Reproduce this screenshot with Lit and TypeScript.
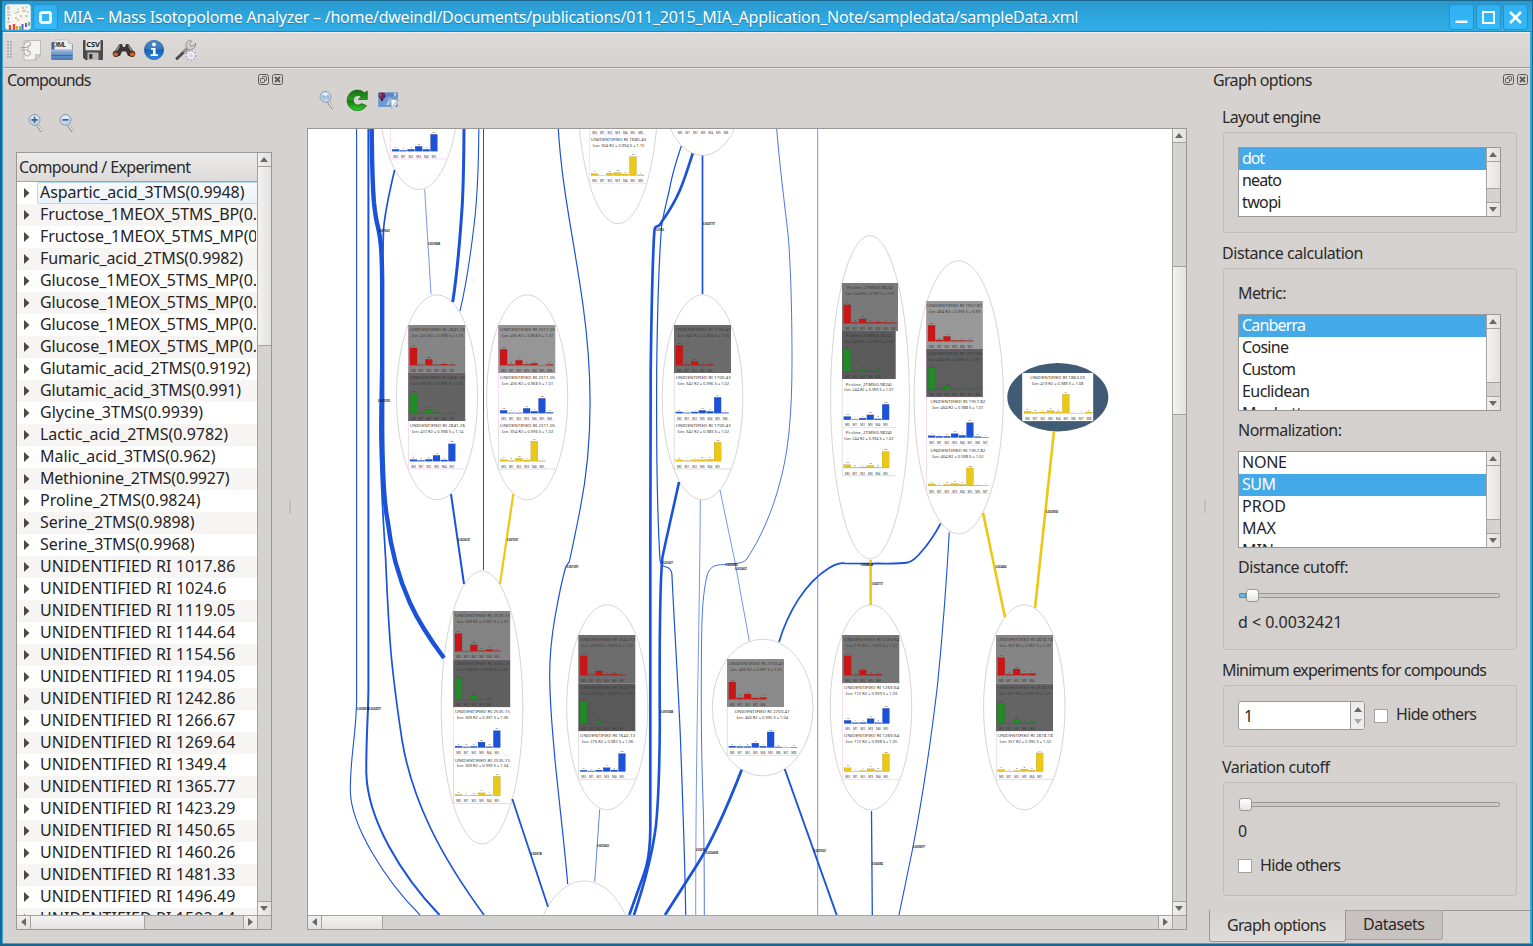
import { LitElement, html, svg, css, nothing } from "lit";
import { customElement, property } from "lit/decorators.js";

/** One-line label whose tracking is tuned so that it fills a given width. */
@customElement("fit-label")
class FitLabel extends LitElement {
  @property({ type: Number }) w = 0;
  @property() text = "";
  static styles = css`
    :host { display: inline-block; white-space: pre; flex: none; }
    span { display: inline-block; }
  `;
  firstUpdated() {
    const el = this.renderRoot.querySelector("span") as HTMLElement;
    const n = this.text.length;
    if (this.w && n > 1) {
      const natural = el.getBoundingClientRect().width;
      el.style.letterSpacing = `${(this.w - natural) / (n - 1)}px`;
    }
  }
  render() {
    return html`<span>${this.text}</span>`;
  }
}

const t = (text: string, w: number) => html`<fit-label .text=${text} .w=${w}></fit-label>`;

const UNK = 195.5;
const compounds: [string, number][] = [
  ["Aspartic_acid_3TMS(0.9948)", 204.5],
  ["Fructose_1MEOX_5TMS_BP(0.", 217],
  ["Fructose_1MEOX_5TMS_MP(0", 217.5],
  ["Fumaric_acid_2TMS(0.9982)", 203],
  ["Glucose_1MEOX_5TMS_MP(0.", 217],
  ["Glucose_1MEOX_5TMS_MP(0.", 217],
  ["Glucose_1MEOX_5TMS_MP(0.", 217],
  ["Glucose_1MEOX_5TMS_MP(0.", 217],
  ["Glutamic_acid_2TMS(0.9192)", 210.5],
  ["Glutamic_acid_3TMS(0.991)", 201],
  ["Glycine_3TMS(0.9939)", 163],
  ["Lactic_acid_2TMS(0.9782)", 188],
  ["Malic_acid_3TMS(0.962)", 175.5],
  ["Methionine_2TMS(0.9927)", 189.5],
  ["Proline_2TMS(0.9824)", 160.5],
  ["Serine_2TMS(0.9898)", 154.5],
  ["Serine_3TMS(0.9968)", 154.5],
  ["UNIDENTIFIED RI 1017.86", UNK],
  ["UNIDENTIFIED RI 1024.6", 186.5],
  ["UNIDENTIFIED RI 1119.05", UNK],
  ["UNIDENTIFIED RI 1144.64", UNK],
  ["UNIDENTIFIED RI 1154.56", UNK],
  ["UNIDENTIFIED RI 1194.05", UNK],
  ["UNIDENTIFIED RI 1242.86", UNK],
  ["UNIDENTIFIED RI 1266.67", UNK],
  ["UNIDENTIFIED RI 1269.64", UNK],
  ["UNIDENTIFIED RI 1349.4", 186.5],
  ["UNIDENTIFIED RI 1365.77", UNK],
  ["UNIDENTIFIED RI 1423.29", UNK],
  ["UNIDENTIFIED RI 1450.65", UNK],
  ["UNIDENTIFIED RI 1460.26", UNK],
  ["UNIDENTIFIED RI 1481.33", UNK],
  ["UNIDENTIFIED RI 1496.49", UNK],
  ["UNIDENTIFIED RI 1502.14", UNK],
];

/* ---------- graph data ---------- */

const B = "#1a52d9";
const Y = "#ebc815";
const R = "#cc1616";
const G = "#228b27";

// cx, cy, rx, ry
const nodes: number[][] = [
  [418.7, 87, 40.3, 102.5],
  [618, 87, 40.5, 136.7],
  [702.5, 87, 40.5, 68.5],
  [437, 397.3, 40.5, 102.5],
  [527.2, 397.3, 40.5, 102.5],
  [702.5, 397.3, 40.3, 102.5],
  [870, 397.3, 39.4, 161.7],
  [958.7, 397.3, 44.6, 136.6],
  [482, 707.5, 40.8, 136.5],
  [607.2, 707.3, 40.5, 102.5],
  [762.7, 707.5, 50.4, 68.4],
  [871, 707.3, 40.7, 102.5],
  [1024.3, 707.3, 40.7, 102.5],
  [584.5, 963, 50.5, 82],
];

type Panel = {
  x: number; y: number; w: number; bg: string; edge?: string;
  title: string; tw?: number; ion: string; c: string; bars: [number, string][];
};
const P = (x: number, y: number, w: number, bg: string, title: string, ion: string, c: string, bars: string, tw = 55, edge = ""): Panel => ({
  x, y, w, bg, title, ion, c, tw, edge,
  bars: bars.split(" ").map((s) => { const [h, l] = s.split(":"); return [+h, l] as [number, string]; }),
});
const PINK = "#f0c4ec";
const GREY = "#c8c8c8";
const U = "UNIDENTIFIED RI ";
const panels: Panel[] = [
  P(390.3, 111, 56, "#fff", "", "", B, "2:7 1:4 2:6 5:18 2:6 17:62", 55, PINK),
  P(589.3, 87, 57, "#fff", "", "", Y, "0: 0: 0: 0: 0: 0: 0:", 55, PINK),
  P(589.3, 135.3, 57, "#fff", U + "1680.43", "Ion: 304 R2 = 0.994 S = 1.10", Y, "2:7 .3: 2.4:8 3:10 1.6:5 19:75 .7:1", 55, PINK),
  P(674.7, 87, 57, "#fff", "", "", Y, "0: 0: 0: 0: 0: 0: 0:", 55, ""),

  P(408.2, 325, 57, "#858585", U + "2841.26", "Ion: 472 R2 = 0.998 S = 1.01", R, "17.5:69 .5:1 6:23 .6:1 1.3:5 .7:2", 55, "#b58fb3"),
  P(408.2, 373, 57, "#636363", U + "2841.26", "Ion: 399 R2 = 0.996 S = 1.00", G, "20:83 .7:2 4:13 1:4 .2: .3:1", 55, "#7d637c"),
  P(408.2, 421, 57, "#fff", U + "2841.26", "Ion: 472 R2 = 0.998 S = 1.14", B, "1.8:6 1:5 2:5 6:17 1.4:4 17.5:68", 55, PINK),

  P(498.3, 325, 57, "#969696", U + "2311.05", "Ion: 456 R2 = 0.968 S = 1.01", R, "16:65 1:3 5:19 1:3 2:7 .2: 1:3", 55, "#b58fb3"),
  P(498.3, 373, 57, "#fff", U + "2311.05", "Ion: 456 R2 = 0.968 S = 1.01", B, "3:10 .5:1 .5:1 5:19 2:7 15:53 1:3", 55, PINK),
  P(498.3, 421, 57, "#fff", U + "2311.05", "Ion: 354 R2 = 0.996 S = 1.02", Y, "1.6:6 .7:2 3:10 1.3:4 20:77 .5:1", 55, GREY),

  P(674, 325, 57, "#6b6b6b", U + "1700.43", "Ion: 342 R2 = 0.994 S = 1.00", R, "20:78 .7:2 4:13 .7:2 1:3"),
  P(674, 373, 57, "#fff", U + "1700.43", "Ion: 342 R2 = 0.996 S = 1.02", B, "1.4:5 .6:1 1.4:4 3:12 2:6 16:61 .7:1", 55, GREY),
  P(674, 421, 57, "#fff", U + "1700.43", "Ion: 342 R2 = 0.983 S = 1.02", Y, "1.4:5 .6:1 1.4:4 1.6:8 2:6 19:72", 55, GREY),

  P(842, 283, 56, "#797979", "Proline_2TMS(0.9824)", "Ion: 244 R2 = 0.997 S = 1.01", R, "18.5:71 1:3 4.5:16 1:2 1.3:5 1:2 .7:1", 46),
  P(842, 331, 53.7, "#5b5b5b", "Proline_2TMS(0.9824)", "Ion: 244 R2 = 0.999 S = 1.00", G, "22:87 .5:1 2:8 .5:1 .8:3", 46),
  P(842, 379.5, 53.7, "#fff", "Proline_2TMS(0.9824)", "Ion: 244 R2 = 0.999 S = 1.07", B, "3.3:13 .5:1 1.7:7 5:20 1:3 15.5:60", 46, GREY),
  P(842, 427.7, 53.7, "#fff", "Proline_2TMS(0.9824)", "Ion: 244 R2 = 0.994 S = 1.02", Y, "3.3:13 .6:2 1:4 2.5:10 .7:3 16.5:65", 46, GREY),

  P(926.3, 301, 56.5, "#999", U + "1957.82", "Ion: 464 R2 = 0.999 S = 0.99", R, "16:63 1.4:5 5:18 1:4 1:4 .7:2", 55, "#b58fb3"),
  P(926.3, 349, 56.5, "#5e5e5e", U + "1957.82", "Ion: 464 R2 = 0.999 S = 1.01", G, "22:84 .5:1 3:10 .4: .5:1 .2: .5:1", 55, "#9d739c"),
  P(926.3, 397.3, 63.3, "#fff", U + "1957.82", "Ion: 464 R2 = 0.988 S = 1.01", B, "2:7 1.4:4 1.4:5 4:15 2.3:7 15:57 1:3 .5:1", 55, PINK),
  P(926.3, 445.6, 63.3, "#fff", U + "1957.82", "Ion: 464 R2 = 0.998 S = 1.02", Y, "2:7 .4:1 1.4:5 2.3:8 1.6:5 18:70 .5:1 .4:1", 55, PINK),

  P(453.2, 611, 57, "#838383", U + "2535.15", "Ion: 309 R2 = 0.997 S = 1.01", R, "17.7:69 .3: 6.5:23 .7:3 1.8:6 .7:1", 55, "#b58fb3"),
  P(453.2, 659.3, 57, "#5f5f5f", U + "2535.15", "Ion: 309 R2 = 0.998 S = 1.01", G, "21.5:87 .3: 4.3:13 .3: .7:2"),
  P(453.2, 707.3, 57, "#fff", U + "2535.15", "Ion: 309 R2 = 0.997 S = 1.06", B, "1.5:5 .8:3 1.3:5 5.5:20 1:3 17:67", 55, PINK),
  P(453.2, 755.5, 57, "#fff", U + "2535.15", "Ion: 309 R2 = 0.999 S = 1.04", Y, "1.3:5 .6:1 .8:2 3:11 1:4 19.5:75", 55, GREY),

  P(578.3, 635, 57, "#6d6d6d", U + "1642.13", "Ion: 273 R2 = 1.000 S = 1.01", R, "19.5:76 .7:1 4.3:14 1:3 1.4:5 .7:1"),
  P(578.3, 683.3, 57, "#595959", U + "1642.13", "Ion: 273 R2 = 1.000 S = 1.01", G, "22:87 .3:1 2:8 .4:1 .4:1 .4:1"),
  P(578.3, 731.3, 57, "#fff", U + "1642.13", "Ion: 273 R2 = 0.982 S = 1.06", B, "1.4:6 .7:1 1.5:5 4:14 1.6:5 18:70", 55, GREY),

  P(727, 659, 57, "#8a8a8a", U + "2703.41", "Ion: 400 R2 = 0.997 S = 1.01", R, "17.3:68 1.5:5 5.3:19 1.3:4 1.8:5"),
  P(727, 707.3, 70.5, "#fff", U + "2703.41", "Ion: 400 R2 = 0.995 S = 1.04", B, "1.5:6 1.2:4 1.2:3 4.5:17 1.4:4 15.7:60 .7:2 .3:1 .5:2", 55, GREY),

  P(842.3, 635, 57, "#747474", U + "1269.64", "Ion: 172 R2 = 1.000 S = 1.01", R, "19.5:76 .5:1 5.3:17 1:3 1.2:3", 55, "#8d738c"),
  P(842.3, 683.3, 57, "#fff", U + "1269.64", "Ion: 172 R2 = 0.999 S = 1.03", B, "3.3:12 1:4 1.2:4 5:19 1:3 15.3:58", 55, PINK),
  P(842.3, 731.3, 57, "#fff", U + "1269.64", "Ion: 172 R2 = 0.998 S = 1.05", Y, "3.8:15 .5:1 1:4 2.8:11 1:3 17.7:68", 55, PINK),

  P(996, 635, 57, "#858585", U + "2818.18", "Ion: 357 R2 = 0.967 S = 1.07", R, "17.6:67 1:3 6.3:22 1.5:5 2:7"),
  P(996, 683.3, 57, "#646464", U + "2818.18", "Ion: 357 R2 = 0.997 S = 1.01", G, "20.7:78 .4: 4.3:15 1:4 1.4:5"),
  P(996, 731.3, 57, "#fff", U + "2818.18", "Ion: 357 R2 = 0.995 S = 1.02", Y, "2:6 .6:1 1:3 2.5:8 1.4:5 18.7:71", 55, GREY),
  P(1022.2, 373, 71, "#fff", U + "1863.03", "Ion: 419 R2 = 0.989 S = 1.08", Y, "2:6 1:3 1.3:4 2.7:9 1.4:5 19:71 .3:1 .3:1 1.3:5"),
];

// stroke width, colour, path
const edges: [number, string, string][] = [
  [1.1, B, "M356.6 129V700C356.2 735 350.3 755 350.3 790C350.3 825 385 880 420 915"],
  [2, B, "M368.4 129V690C368 720 366 740 366.3 773C367.5 820 402 876 439.5 915"],
  [4.4, B, "M371.7 129C372 170 372.5 185 374 203C375.5 217 376.5 222 378 227C380 236 382.2 245 382.2 290V430C382.5 470 383.5 500 387.5 520C391.5 555 401 583 410 603C420 625 432 642 444 658"],
  [1.7, B, "M394.6 170C390 190 385 210 383.5 230C382.5 260 382.5 300 381.5 340C380.5 380 379.5 420 380 440C381 490 384 530 385.7 560C387 590 388.5 620 390 640C392 670 396 700 402 740C412 800 440 855 484 915"],
  [.6, B, "M424.7 189.3L431 294.3"],
  [3, B, "M464 129C463.8 160 463.5 190 461.7 213C459.5 245 457 275 452.7 302"],
  [1.1, B, "M478.8 129C478.6 170 477 200 474.3 223C470 260 465 290 460 311"],
  [1, B, "M483.5 129V570"],
  [1.2, B, "M558.3 129C562 190 574 240 583 305C592 370 594 440 580 510C575 535 572 550 569.3 561.7L565.7 567C562 580 558 600 555 617C551 640 549.5 655 549.7 677C550 710 553 735 555 760C560 810 565 850 567.7 884"],
  [2, B, "M451 494L464 584"],
  [2.2, Y, "M513.3 494L500 584"],
  [1.8, B, "M512.3 799L548 906.7"],
  [.7, B, "M599.7 809.3L594.7 881.7"],
  [2.7, B, "M692.7 153.3C689 165 685 178 680 190C674 204 668 213 661.7 221.7Q660 226 656.5 226.5Q654.5 227 654.3 232C652.5 260 651.5 310 650.7 370C650.3 420 650.3 480 650.3 560V830C650 860 645 872 640 885L629.3 915"],
  [1.2, B, "M681.3 146C676 162 672 175 670 187C666 205 663 215 661.5 227C659 260 657.5 300 656.7 370C656.3 440 657 510 660 560Q661 566 666 567Q671 568 671.9 574C674 620 679 700 680.5 740C683 810 685 860 685.7 915"],
  [2.6, B, "M679 482C673 510 667 535 662.3 558C659.5 590 659.3 640 659.8 727C659.5 770 658.5 800 656 825C653 850 645 882 634 915"],
  [1.7, B, "M702.5 155.5V294"],
  [.8, B, "M776.7 129C780 170 786 215 788.3 237C791 270 792 320 792 360C792 410 789 450 780 482C773 510 760 540 746 560Q743 563 735 563.5L718 565Q709 566 706.7 577C703 595 702 610 701.6 640C701 700 701 740 703 800C704 830 704.3 870 704.3 915"],
  [.6, B, "M817.7 129V915"],
  [.6, B, "M700.3 500C700 560 698.5 650 697.5 700C696.5 770 695.7 830 695.7 915"],
  [.6, B, "M720 490L735 562L749.3 641"],
  [1.8, B, "M940.7 523.3C935 534 929 543 922 551Q914 561 908 562.5C895 564.5 880 563 871 563.7L845 563.3Q838 562.5 829 568C805 583 788 612 779 642"],
  [1.1, B, "M949.3 532.3C946 590 942 640 937.5 685C931 740 922 800 913 847L899 915"],
  [2.6, Y, "M983 512.7L1005 617.3"],
  [2.6, Y, "M1054 431L1035 608"],
  [2.6, Y, "M870.6 560V605"],
  [2.8, B, "M741.7 769.7C728 805 710 845 695 868L665 915"],
  [1.9, B, "M784.7 769L836.7 915"],
  [1.3, B, "M871.5 811L872.3 915"],
];

const edgeLabels: [number, number, string, number][] = [
  [379, 232, "0.00199421", 11], [428, 244.6, "0.00318488", 12], [703, 225, "0.00207757", 12], [656, 230.8, "0.001826", 8],
  [458, 541, "0.00234147", 12], [507, 541, "0.00279419", 11], [566.5, 567.7, "0.00312991", 12], [378, 401.6, "0.00153992", 12],
  [357, 709.9, "0.003005180.00229477", 24], [531, 855, "0.00255786", 11], [597, 847, "0.00314423", 12], [661, 713, "0.00153848", 12],
  [663, 563.6, "0.00314477", 10], [1046, 513, "0.00239500", 12], [995.5, 568, "0.00224864", 11], [861, 566, "0.00248188", 12],
  [872, 585, "0.00207737", 11], [725.5, 566, "0.00303858", 12], [735, 570.2, "0.00324021", 12], [696, 850.8, "0.00310", 9],
  [706, 853.7, "0.00234698", 12], [814, 851.6, "0.00275421", 12], [872, 864.8, "0.00245882", 11], [913, 848, "0.00296977", 12],
];

const drawPanel = (p: Panel) => {
  const base = p.y + 40.3;
  const mid = p.x + p.w / 2 + (p.w === 57 ? 0.8 : 0);
  const step = 7.67;
  return svg`
    <rect x=${p.x} y=${p.y} width=${p.w} height="48.1" fill=${p.bg}></rect>
    ${p.edge ? svg`<path d="M${p.x + .3} ${p.y}v48h${p.w}" fill="none" stroke=${p.edge} stroke-width=".6"></path>` : nothing}
    ${p.title ? svg`
      <text class="ti" x=${mid} y=${p.y + 6} textLength=${p.tw as number} lengthAdjust="spacingAndGlyphs">${p.title}</text>
      <text class="io" x=${mid} y=${p.y + 11.9} textLength=${p.tw === 46 ? 49 : 51.5} lengthAdjust="spacingAndGlyphs">${p.ion}</text>` : nothing}
    ${p.bars.map(([h, l], i) => svg`
      ${h ? svg`<rect x=${p.x + 1.8 + i * step} y=${base - h} width="7" height=${h} fill=${p.c} stroke="#333" stroke-opacity=".45" stroke-width=".25"></rect>` : nothing}
      ${l ? svg`<text class="bv" x=${p.x + 5.3 + i * step} y=${base - h - 1.4}>${l}</text>` : nothing}
      <text class="bl" x=${p.x + 5.3 + i * step} y=${p.y + 46.9}>M${i}</text>`)}
  `;
};

const graph = () => svg`
  ${nodes.map(([cx, cy, rx, ry]) => svg`<ellipse cx=${cx} cy=${cy} rx=${rx} ry=${ry} fill="#fff" stroke="#d0d0d0" stroke-width=".9"></ellipse>`)}
  <ellipse cx="1057.8" cy="397.2" rx="50.5" ry="34.2" fill="#415b75"></ellipse>
  ${panels.map(drawPanel)}
  ${edges.map(([w, c, d]) => svg`<path d=${d} fill="none" stroke=${c} stroke-width=${w}></path>`)}
  ${edgeLabels.map(([x, y, s, w]) => svg`<text class="el" x=${x} y=${y} textLength=${w} lengthAdjust="spacingAndGlyphs">${s}</text>`)}
`;

/* ---------- icons ---------- */

const lens = (mark: unknown) => html`<svg width="18" height="20" viewBox="0 0 18 20">
  <path d="M9 11.500l4.800 7" stroke="#8b8b8b" stroke-width="2.800"></path>
  <path d="M9.300 11.500l4.600 6.700" stroke="#f2f2f2" stroke-width="1.300"></path>
  <circle cx="6.500" cy="6.800" r="5.500" fill="#bdd4ec" stroke="#909fae" stroke-width="1"></circle>
  <path d="M2.500 6a4.200 4.200 0 0 1 8 0z" fill="#e3eef9"></path>
  ${mark}
</svg>`;
const plus = svg`<path d="M6.500 3.800v6M3.500 6.800h6" stroke="#3f608c" stroke-width="1.700"></path>`;
const minus = svg`<path d="M3.500 6.800h6" stroke="#3f608c" stroke-width="1.700"></path>`;
const oneToOne = svg`<text x="6.500" y="8.800" font-size="5.500" font-weight="700" text-anchor="middle" fill="#8298b3">1:1</text>`;

const docIcon = html`<svg width="22" height="22" viewBox="0 0 22 22">
  <path d="M4 1.500H20.500V16l-5 5H4z" fill="#f3f3f1" stroke="#bdbbb8"></path>
  <path d="M20.500 15.500c-2 .5-4 .3-5 .2.300 1.600.3 3.600-.2 5.300z" fill="#dedcd9" stroke="#aaa8a5" stroke-width=".8"></path>
  <path d="M1 8.500h6.500M1 11h6.500" stroke="#a5a5a3" stroke-width="1"></path>
  <path d="M4.500 6a3 3 0 0 1 4-3.200M8 6v7.500M4.500 13.500a3 3 0 0 0 4 3.200M8.500 3a2 2 0 0 1 0 4M8.500 12a2 2 0 0 1 0 4" fill="none" stroke="#b0aeab" stroke-width="1.100"></path>
</svg>`;
const xmlIcon = html`<svg width="22" height="22" viewBox="0 0 22 22">
  <defs><linearGradient id="xf" x2="0" y2="1"><stop offset="0" stop-color="#a5c0e2"></stop><stop offset=".4" stop-color="#7199ce"></stop><stop offset="1" stop-color="#4b7ab9"></stop></linearGradient></defs>
  <path d="M.5 3v17h21V5l-3-2z" fill="#3f6495"></path>
  <path d="M3.500 11V1H17l4 4v6z" fill="#eeedeb" stroke="#aaa" stroke-width=".5"></path>
  <path d="M17 1v4h4z" fill="#cccac7"></path>
  <text x="9.500" y="8" font-size="6.500" font-weight="700" text-anchor="middle" fill="#444" textLength="11">XML</text>
  <path d="M.3 10.500h21.400V20q0 1-1 1H1.300q-1 0-1-1z" fill="url(#xf)"></path>
  <path d="M.5 16.500h21" stroke="#3d6aa6" stroke-width="1"></path>
</svg>`;
const csvIcon = html`<svg width="22" height="22" viewBox="0 0 22 22">
  <path d="M2 1h18q1 0 1 1v18q0 1-1 1H3.500L1 18.500V2q0-1 1-1z" fill="#4c4a48"></path>
  <rect x="3.500" y=".8" width="15" height="10.500" fill="#dfe3e3"></rect>
  <text x="11" y="7.800" font-size="7.500" font-weight="700" text-anchor="middle" fill="#222" textLength="13.500">CSV</text>
  <rect x="5.500" y="13.500" width="11" height="7.500" fill="#bab8b5"></rect><rect x="7.300" y="15" width="3" height="4.800" fill="#333"></rect>
</svg>`;
const binoIcon = html`<svg width="24" height="22" viewBox="0 0 24 22">
  <path d="M1.500 14l5-7.500q.5-2 3.500-1.500l1 3h2l1-3q3-.5 3.500 1.500l5 7.500-1.500 3.500-5-.5-2-4.500h-4l-2 4.500-5 .5z" fill="#3a3836"></path>
  <path d="M7.500 7l-3.500 5.500M16.500 7l3.500 5.500" stroke="#9c9996" stroke-width="1.300"></path>
  <ellipse cx="3.900" cy="14.800" rx="3.200" ry="3.100" fill="#46301f"></ellipse><ellipse cx="20.100" cy="14.800" rx="3.200" ry="3.100" fill="#46301f"></ellipse>
  <ellipse cx="3.700" cy="15.300" rx="2.300" ry="2" fill="#cf5f22"></ellipse><ellipse cx="20.300" cy="15.300" rx="2.300" ry="2" fill="#cf5f22"></ellipse>
</svg>`;
const infoIcon = html`<svg width="22" height="22" viewBox="0 0 22 22">
  <defs><linearGradient id="ig" x2="0" y2="1"><stop offset="0" stop-color="#2a6fc0"></stop><stop offset=".5" stop-color="#1560b4"></stop><stop offset="1" stop-color="#2b8ae6"></stop></linearGradient></defs>
  <circle cx="11" cy="11" r="9.600" fill="url(#ig)" stroke="#2a62a5" stroke-width=".8"></circle>
  <path d="M2.500 10a8.500 8.500 0 0 1 17 0q-8 2-17 0z" fill="#fff" opacity=".15"></path>
  <circle cx="11" cy="5.500" r="1.900" fill="#fff"></circle>
  <path d="M8 9h4.500v6.200H15V17H7.500v-1.800H10v-4.400H8z" fill="#fff"></path>
</svg>`;
const toolIcon = html`<svg width="24" height="24" viewBox="0 0 24 24">
  <circle cx="17" cy="17.500" r="3.600" fill="none" stroke="#f0f0f6" stroke-width="3"></circle>
  <circle cx="17" cy="17.500" r="4.500" fill="none" stroke="#a0a0b8" stroke-width="1.600" stroke-dasharray="1.500 1.500"></circle>
  <path d="M12.500 11.500L3 20.500" stroke="#4d4d4d" stroke-width="3" stroke-linecap="round"></path>
  <path d="M13.500 10.500L9.500 14.300" stroke="#9a9a9a" stroke-width="2.400"></path>
  <path d="M12 9Q11.500 4 15.500 2l2 1-2 3 1.500 2.200 3.500-.7 1-2.500Q22.500 9 19 11 16 12 14 11.500z" fill="#cfcfcf" stroke="#858585" stroke-width=".8"></path>
</svg>`;
const refreshIcon = html`<svg width="22" height="22" viewBox="0 0 22 22">
  <defs><linearGradient id="rg" x2="0" y2="1"><stop offset="0" stop-color="#126d12"></stop><stop offset=".45" stop-color="#2c9a25"></stop><stop offset=".55" stop-color="#117a10"></stop><stop offset="1" stop-color="#35d42a"></stop></linearGradient></defs>
  <path d="M21.300 2V10.500H12.500l2.600-3A4.800 4.800 0 1 0 15.500 14.600l5 2A10.400 10.400 0 1 1 18.500 3.700z" fill="url(#rg)" stroke="#0c6b0c" stroke-width=".7"></path>
</svg>`;
const pictureIcon = html`<svg width="22" height="18" viewBox="0 0 22 18">
  <rect x=".6" y="1" width="20.800" height="15.500" fill="#6b9bd0" stroke="#d8d6d4" stroke-width="1"></rect>
  <path d="M1 1.500h20v4H1z" fill="#4a79b5" opacity=".6"></path>
  <circle cx="5" cy="4.800" r="3.300" fill="#7c2050"></circle><circle cx="3.500" cy="4" r="1.500" fill="#c23a3a"></circle><circle cx="7" cy="5.300" r="1.400" fill="#4a2a8a"></circle>
  <path d="M3.300 7.800h3.200l-1 2.500h-1z" fill="#2a2030"></path>
  <path d="M9 14l2.500-5 2 1.500L12 14zM16.500 2.500l3-1v3l-2 1.500zM11 7l3 1-1 2z" fill="#c5d6ea" opacity=".8"></path>
  <path d="M21.500 9l-7.500 8h1.500q5-2.500 6-8z" fill="#fff" stroke="#999" stroke-width=".6"></path>
  <path d="M14 8.500l6.500.5-6 7.500z" fill="#fff" stroke="#aaa" stroke-width=".5"></path>
</svg>`;
const floatIcon = html`<svg width="11" height="11" viewBox="0 0 11 11" fill="none" stroke="#5d5b59"><rect x=".5" y=".5" width="10" height="10" rx="2"></rect><rect x="2.500" y="4.500" width="4" height="4" rx=".8"></rect><path d="M4.500 4.500V3.300q0-.8.8-.8h2.400q.8 0 .8.800v2.400q0 .8-.8.8H6.500"></path></svg>`;
const closeIcon = html`<svg width="11" height="11" viewBox="0 0 11 11" fill="none" stroke="#5d5b59"><rect x=".5" y=".5" width="10" height="10" rx="2"></rect><path d="M3 3l5 5M8 3l-5 5" stroke-width="1.900"></path></svg>`;
const appIcon = html`<svg width="26" height="26" viewBox="0 0 26 26">
  <rect x=".3" y=".3" width="25.400" height="25.400" rx="3" fill="#f7f4f2"></rect>
  <path d="M2 3h3M2 5h3M2 8h3M2 11h3.500M3.500 13v3M2 18h3" stroke="#a5a3a1" stroke-width="1.200"></path>
  <path d="M9 9h3M12 5h2M20 3h3" stroke="#cfe8bd" stroke-width="2"></path><path d="M17 7h4M10 14h2M20 12h3" stroke="#b5e0a5" stroke-width="2"></path>
  <path d="M12 8h2M15 12h2M12 16h2M22 8h1.500M17 4h2" stroke="#f0b4bb" stroke-width="1.800"></path>
  <path d="M5 26v-5M9 26v-6" stroke="#e24b34" stroke-width="2.400"></path><path d="M12 26v-4" stroke="#e59a2c" stroke-width="2"></path><path d="M15 26v-4M24 22v-4" stroke="#55aa50" stroke-width="1.600"></path><path d="M17.500 26v-6M21 23v-4" stroke="#6a5ac0" stroke-width="2"></path>
</svg>`;

/* ---------- widgets ---------- */

const tri: Record<string, string> = { u: "M0 5L4 0L8 5z", d: "M0 0L4 5L8 0z", l: "M5 0L0 4L5 8z", r: "M0 0L5 4L0 8z" };
const arrow = (k: string, fill = "#6b6967") => {
  const v = k === "u" || k === "d";
  return html`<svg width=${v ? 8 : 5} height=${v ? 5 : 8}><path d=${tri[k]} fill=${fill}></path></svg>`;
};
const expander = html`<svg class="ar" width="6" height="10"><path d="M0 0L5.500 5L0 10z" fill="#4c4a49"></path></svg>`;
const vbar = (before: number, thumb: number) => html`<div class="vb">
  <div class="btn first">${arrow("u")}</div>
  <div style="height:${before}px"></div>
  <div class="thumb ${before ? "lead" : ""}" style="height:${thumb}px"></div>
  <div class="grow"></div>
  <div class="btn last">${arrow("d")}</div>
</div>`;
const hbar = (thumb: number) => html`<div class="hb">
  <div class="btn first">${arrow("l")}</div>
  <div class="thumb" style="width:${thumb}px"></div>
  <div class="grow"></div>
  <div class="btn last">${arrow("r")}</div>
</div>`;
const list = (cls: string, items: [string, number][], sel: number, thumb: number) => html`<div class="list ${cls}">
  <div class="items">${items.map(([s, w], i) => html`<div class="item ${i === sel ? "sel" : ""}">${t(s, w)}</div>`)}</div>
  ${vbar(0, thumb)}
</div>`;
const slider = (fill: number) => html`<div class="slider"><div class="fill" style="width:${fill}px"></div><div class="knob"></div><div class="rail"></div></div>`;

@customElement("app-root")
class AppRoot extends LitElement {
  static styles = css`
    :host { display: block; width: 1533px; height: 946px; overflow: hidden; font: 16px/20px "Noto Sans", "Open Sans", sans-serif; color: #2c2a29; }
    * { box-sizing: border-box; }
    svg { display: block; flex: none; }
    .win { width: 1533px; height: 946px; display: flex; flex-direction: column; border: solid #1b668c; border-width: 1px 1px 2px 2px; background: #2ea9e4; }
    .title { height: 31px; flex: none; display: flex; align-items: flex-start; padding: 3px 4px 0 3px; background: linear-gradient(#2a98cc, #2ea9e2 65%, #30ace6); border-bottom: 1px solid #2187ba; color: #fff; text-shadow: 0 1px 1px #1c75a3; }
    .title fit-label { margin: 3px 0 0 5px; }
    .title .sp { flex: 1; }
    .tb { width: 25px; height: 26px; margin-left: 2px; border-radius: 3px; border: 1px solid #2691c8; background: linear-gradient(#30b0f0, #34b9fa); display: grid; place-items: center; }
    .body { flex: 1; margin: 0 2px 1px 1px; background: #d6d2cf; display: flex; flex-direction: column; min-height: 0; }
    .tools { height: 36px; flex: none; display: flex; align-items: center; border-top: 1px solid #eeece9; border-bottom: 1px solid #a19d9a; background: linear-gradient(#dedad7, #d6d2cf); padding-left: 4px; }
    .tools .grip { width: 6px; height: 18px; background: radial-gradient(circle at 1px 1px, #b5b1ae .7px, transparent 1px) 0 0 / 3px 3px; margin-right: 7px; }
    .tools .ic { width: 31px; height: 26px; display: flex; align-items: center; }
    .tools .ic:nth-child(n+5) { position: relative; left: -1px; }
    .main { flex: 1; min-height: 0; display: grid; grid-template-columns: 283px 21px 880px 22px 321px; border-top: 1px solid #e5e2df; }
    .col { display: flex; flex-direction: column; min-height: 0; min-width: 0; }
    .dock { height: 23px; flex: none; display: flex; align-items: center; gap: 3px; padding: 0 3px 2px 4px; }
    .dock.right { padding-right: 2px; }
    .dock fit-label { flex: 1; }
    .split { display: flex; align-items: center; justify-content: flex-start; padding: 3px 0 0 3px; }
    .split div { width: 3px; height: 13px; background: radial-gradient(circle at 1px 1px, #bbb7b4 .6px, transparent 1px) 0 0 / 3px 2px; }
    .split.r { padding: 0 0 0 17px; }
    .zooms { height: 60px; flex: none; display: flex; padding: 21px 0 0 25px; gap: 13px; }
    .gtools { height: 59px; flex: none; display: flex; align-items: center; padding: 2px 0 0 12px; }
    .gtools > :nth-child(1) { margin-right: 9px; }
    .gtools > :nth-child(2) { margin-right: 9px; }

    .scroll { display: grid; grid-template-columns: 1fr 14px; grid-template-rows: 1fr 14px; border: 1px solid #9b9794; background: #d6d2cf; min-height: 0; }
    .tree { width: 256px; height: 778px; margin-left: 13px; }
    .canvas { width: 880px; height: 802px; }
    .vb { width: 14px; display: flex; flex-direction: column; border-left: 1px solid #a5a29f; background: #d5d3d1; }
    .hb { height: 14px; display: flex; border-top: 1px solid #a5a29f; background: #d5d3d1; }
    .grow { flex: 1; }
    .btn { display: grid; place-items: center; flex: none; }
    .vb .btn { height: 14px; background: linear-gradient(90deg, #f0efee, #e2e1e0); padding-right: 1px; }
    .hb .btn { width: 14px; background: linear-gradient(#f0efee, #e2e1e0); padding-bottom: 1px; }
    .vb .first { border-bottom: 1px solid #a5a29f; } .vb .last { border-top: 1px solid #a5a29f; }
    .hb .first { border-right: 1px solid #a5a29f; } .hb .last { border-left: 1px solid #a5a29f; }
    .vb .thumb { border-bottom: 1px solid #a5a29f; background: linear-gradient(90deg, #f3f2f1, #e3e2e0); flex: none; }
    .vb .lead { border-top: 1px solid #a5a29f; }
    .hb .thumb { border-right: 1px solid #a5a29f; background: linear-gradient(#f3f2f1, #e3e2e0); flex: none; }
    .corner { border: solid #a5a29f; border-width: 1px 0 0 1px; }
    .view { background: #fff; overflow: hidden; min-width: 0; min-height: 0; }
    .head { height: 29px; padding: 4px 0 0 2px; background: linear-gradient(#ecebea, #dcdbd9); border-bottom: 1px solid #a5a29f; }
    .row { height: 22px; display: flex; align-items: center; padding-left: 7px; background: #fff; color: #262423; }
    .row.alt { background: #f6f5f4; }
    .row .ar { margin-right: 7px; }
    .cell { height: 22px; flex: 1; min-width: 0; overflow: hidden; border: 1px solid transparent; padding-left: 2px; line-height: 18px; }
    .cell.cur { border-color: #b7d8ec; border-right: 0; background: linear-gradient(#f7fafd, #e9f2fb); border-radius: 2px 0 0 2px; }

    .cap { height: 35px; flex: none; display: flex; align-items: flex-end; padding: 0 0 5px 13px; }
    .cap.top { height: 40px; }
    .box { width: 294px; margin-left: 14px; flex: none; border: 1px solid #c0bcb9; border-radius: 3px; background: #d4d0cd; padding: 14px 0 0 14px; box-shadow: 0 1px 0 #dad7d4; }
    .b1 { height: 101px; } .b2 { height: 382px; } .b3 { height: 62px; } .b4 { height: 114px; }
    .list { width: 263px; border: 1px solid #9b9794; display: flex; background: #fff; }
    .l1 { height: 70px; } .l2 { height: 97px; }
    .items { flex: 1; overflow: hidden; }
    .item { height: 22px; line-height: 20px; padding-left: 3px; color: #262423; }
    .item.sel { background: #43a9e8; color: #fff; }
    .lab { height: 20px; display: flex; }
    .g11 { margin-bottom: 11px; } .t9 { margin-top: 9px; } .t10 { margin-top: 10px; } .t15 { margin-top: 15px; }
    .slider { width: 263px; height: 13px; display: flex; align-items: center; padding-left: 1px; }
    .b2 .slider { margin-top: 12px; } .b4 .slider { margin-top: 1px; }
    .rail { flex: 1; height: 5px; border: 1px solid #9b9794; border-left: 0; border-radius: 0 2px 2px 0; background: #cbc8c5; margin-right: 1px; }
    .fill { height: 5px; background: #62bdf3; border-radius: 2px 0 0 2px; box-shadow: inset 0 0 0 1px #3b8fc2; }
    .knob { width: 13px; height: 13px; border: 1px solid #9b9794; border-radius: 3px; background: linear-gradient(#fff, #e6e5e3); flex: none; }
    .line { display: flex; align-items: center; height: 20px; gap: 8px; }
    .b3 .line { height: 29px; margin-top: 1px; gap: 0; }
    .b3 .line > fit-label { margin: -3px 0 0 8px; }
    .b4 .line fit-label { margin-top: -3px; }
    .spin { width: 127px; height: 29px; border: 1px solid #9b9794; border-radius: 3px; background: #fff; display: flex; align-items: center; padding-left: 5px; margin-right: 9px; overflow: hidden; }
    .spin .arrows { width: 14px; height: 27px; border-left: 1px solid #9b9794; background: #eeedec; display: flex; flex-direction: column; align-items: center; justify-content: space-around; padding: 1px 0; }
    .chk { width: 14px; height: 14px; background: #fff; border: 1px solid #a5a19e; flex: none; }
    .fillr { flex: 1; }
    .tabs { height: 33px; flex: none; display: flex; align-items: flex-start; }
    .tabs .on { width: 137px; height: 32px; border: 1px solid #9b9794; border-top: 0; border-radius: 0 0 3px 3px; background: linear-gradient(#d6d2cf, #dedbd8); padding: 5px 0 0 17px; }
    .tabs .off { width: 97px; height: 30px; border: 1px solid #a8a4a1; border-left: 0; border-radius: 0 0 3px 0; background: #c7c2bf; padding: 3px 0 0 17px; }
    .tabs .rest { flex: 1; border-top: 1px solid #9b9794; }

    .graph { background: #fff; font-family: "Noto Sans", sans-serif; }
    .ti { font-size: 4.2px; text-anchor: middle; fill: #3a3a3a; }
    .io { font-size: 3.4px; text-anchor: middle; fill: #3a3a3a; }
    .bv { font-size: 2.5px; text-anchor: middle; fill: #333; }
    .bl { font-size: 3.2px; text-anchor: middle; fill: #3a3a3a; }
    .el { font-size: 2.5px; font-weight: 700; fill: #111; }
  `;

  render() {
    return html`<div class="win">
      <div class="title">
        ${appIcon}
        <div class="tb"><svg width="15" height="15"><rect x="2.500" y="2.500" width="10" height="10" rx="1.800" fill="none" stroke="#fff" stroke-width="2.800"></rect></svg></div>
        ${t("MIA – Mass Isotopolome Analyzer – /home/dweindl/Documents/publications/011_2015_MIA_Application_Note/sampledata/sampleData.xml", 1015.5)}
        <div class="sp"></div>
        <div class="tb"><svg width="13" height="13"><path d="M.5 10.800h12" stroke="#fff" stroke-width="2.400"></path></svg></div>
        <div class="tb"><svg width="13" height="13"><path d="M1 1h11v11H1z" fill="none" stroke="#fff" stroke-width="1.800"></path></svg></div>
        <div class="tb"><svg width="13" height="13"><path d="M1 1l11 11M12 1l-11 11" stroke="#fff" stroke-width="2.600"></path></svg></div>
      </div>
      <div class="body">
        <div class="tools">
          <div class="grip"></div>
          ${[docIcon, xmlIcon, csvIcon, binoIcon, infoIcon, toolIcon].map((i) => html`<div class="ic">${i}</div>`)}
        </div>
        <div class="main">
          <div class="col">
            <div class="dock">${t("Compounds", 84.5)}${floatIcon}${closeIcon}</div>
            <div class="zooms">${lens(plus)}${lens(minus)}</div>
            <div class="scroll tree">
              <div class="view">
                <div class="head">${t("Compound / Experiment", 172)}</div>
                <div class="rows">
                  ${compounds.map(([s, w], i) => html`<div class="row ${i % 2 ? "alt" : ""}">${expander}<div class="cell ${i ? "" : "cur"}">${t(s, w)}</div></div>`)}
                </div>
              </div>
              ${vbar(0, 179)}${hbar(114)}<div class="corner"></div>
            </div>
          </div>
          <div class="split"><div></div></div>
          <div class="col">
            <div class="gtools">${lens(oneToOne)}${refreshIcon}${pictureIcon}</div>
            <div class="scroll canvas">
              <div class="view"><svg class="graph" width="864" height="786" viewBox="308 129 864 786">${graph()}</svg></div>
              ${vbar(123, 149)}${hbar(61)}<div class="corner"></div>
            </div>
          </div>
          <div class="split r"><div></div></div>
          <div class="col">
            <div class="dock right">${t("Graph options", 99.5)}${floatIcon}${closeIcon}</div>
            <div class="cap top">${t("Layout engine", 99)}</div>
            <div class="box b1">${list("l1", [["dot", 23], ["neato", 40], ["twopi", 39.5]], 0, 27)}</div>
            <div class="cap">${t("Distance calculation", 141.5)}</div>
            <div class="box b2">
              <div class="lab g11">${t("Metric:", 48.5)}</div>
              ${list("l2", [["Canberra", 64], ["Cosine", 47], ["Custom", 54], ["Euclidean", 68], ["Manhattan", 78]], 0, 54)}
              <div class="lab t9 g11">${t("Normalization:", 104)}</div>
              ${list("l2", [["NONE", 45], ["SUM", 34], ["PROD", 44], ["MAX", 34], ["MIN", 32]], 1, 54)}
              <div class="lab t9">${t("Distance cutoff:", 110.5)}</div>
              ${slider(7)}
              <div class="lab t10">${t("d < 0.0032421", 104.5)}</div>
            </div>
            <div class="cap">${t("Minimum experiments for compounds", 265)}</div>
            <div class="box b3">
              <div class="line">
                <div class="spin"><span class="grow">1</span><div class="arrows">${arrow("u")}${arrow("d", "#aaa8a6")}</div></div>
                <div class="chk"></div>${t("Hide others", 81)}
              </div>
            </div>
            <div class="cap">${t("Variation cutoff", 108)}</div>
            <div class="box b4">
              ${slider(0)}
              <div class="lab t10">${t("0", 0)}</div>
              <div class="line t15"><div class="chk"></div>${t("Hide others", 81)}</div>
            </div>
            <div class="fillr"></div>
            <div class="tabs"><div class="on">${t("Graph options", 99.5)}</div><div class="off">${t("Datasets", 62)}</div><div class="rest"></div></div>
          </div>
        </div>
      </div>
    </div>`;
  }
}
